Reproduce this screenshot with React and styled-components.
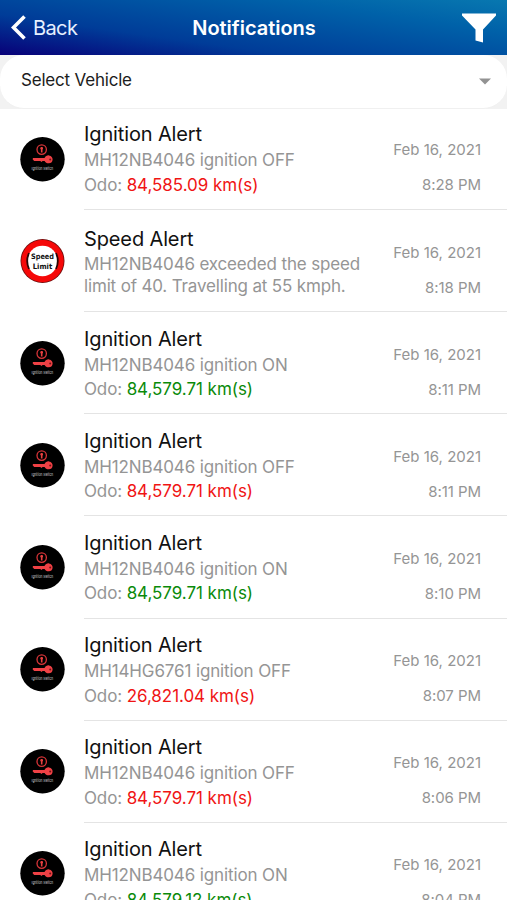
import React from "react";
import styled, { createGlobalStyle } from "styled-components";

const GlobalStyle = createGlobalStyle`
  * {
    box-sizing: border-box;
  }

  body {
    margin: 0;
    background-color: white;
    font-family: Inter, "Liberation Sans", sans-serif;
  }
`;

const Screen = styled.div`
  width: 100%;
  height: 900px;
  overflow: hidden;
  display: flex;
  flex-direction: column;
`;

const Header = styled.header`
  height: 55px;
  flex-shrink: 0;
  display: grid;
  grid-template-columns: 1fr auto 1fr;
  align-items: center;
  padding: 0 11px;
  color: white;
  background: linear-gradient(188deg, #0878b0 0%, #0062a9 25%, #003c98 68%, #080078 100%);
`;

const BackButton = styled.button`
  display: flex;
  align-items: center;
  gap: 7px;
  padding: 0;
  border: none;
  background: none;
  color: #e6f0ff;
  font-family: inherit;
  font-size: 20px;
  letter-spacing: -0.6px;
`;

const Title = styled.h1`
  margin: 0;
  padding-left: 1px;
  font-size: 20px;
  font-weight: 600;
  letter-spacing: -0.03px;
`;

const FilterButton = styled.button`
  justify-self: end;
  display: flex;
  padding: 0;
  border: none;
  background: none;
`;

const SelectBar = styled.div`
  height: 54px;
  flex-shrink: 0;
  background-color: #f2f2f2;
`;

const Select = styled.div`
  height: 100%;
  display: flex;
  align-items: center;
  justify-content: space-between;
  padding: 0 16px 4px 21px;
  border-bottom: 1px solid #f0f0f0;
  border-radius: 24px;
  background-color: white;
  color: #1c1c1c;
  font-size: 17px;
  letter-spacing: -0.2px;
`;

const CaretSlot = styled.span`
  display: flex;
  padding-top: 3px;
`;

const Texts = styled.div`
  padding-top: ${(props) => (props.$tight ? "0" : "2px")};
  color: #959595;
  font-size: 17px;
`;

const When = styled.div`
  display: flex;
  flex-direction: column;
  align-items: flex-end;
  gap: 15px;
  padding-top: 19px;
  color: #959595;
  font-size: 15px;
  line-height: 20px;
`;

const List = styled.ul`
  margin: 0;
  padding: 0;
  list-style: none;
`;

const Row = styled.li`
  height: 102.15px;
  display: flex;
  align-items: center;
  padding-left: 20px;

  &:first-child {
    height: 101px;
  }

  &:first-child ${Texts} {
    padding: 0;
  }

  &:first-child ${When} {
    padding-top: 17px;
  }
`;

const IconSlot = styled.div`
  width: 64px;
  flex-shrink: 0;
  display: flex;
`;

const Content = styled.div`
  flex: 1;
  height: 100%;
  display: flex;
  justify-content: space-between;
  align-items: center;
  padding-right: 26px;
  border-bottom: 1px solid #e4e4e4;
`;

const Name = styled.h2`
  margin: 0;
  color: #111;
  font-size: 20px;
  font-weight: 400;
  line-height: ${(props) => (props.$tight ? "28px" : "27px")};
  letter-spacing: -0.13px;
`;

const Line = styled.p`
  margin: 0;
  line-height: ${(props) => (props.$tight ? "22px" : "24.5px")};
  letter-spacing: ${(props) => (props.$tight ? "-0.16px" : "-0.13px")};
  white-space: nowrap;
`;

const Distance = styled.span`
  color: ${(props) => (props.$on ? "#0a8a0a" : "#f01414")};
  letter-spacing: -0.05px;
`;

const Time = styled.span`
  letter-spacing: -0.05px;
`;

const BackIcon = () => (
  <svg width="15" height="26" viewBox="0 0 15 26">
    <path d="M13.5 1.5 L2.5 12.5 L13.5 23.5" fill="none" stroke="white" strokeWidth="3.6" />
  </svg>
);

const FilterIcon = () => (
  <svg width="34" height="30" viewBox="0 0 34 30">
    <path d="M0 0.5 H34 V2.5 L21 16.5 V29.5 L13.5 27.5 V16.5 L0 2.5 Z" fill="white" />
  </svg>
);

const CaretIcon = () => (
  <svg width="12" height="7" viewBox="0 0 12 7">
    <path d="M0 0.5 H12 L6 6.5 Z" fill="#929292" />
  </svg>
);

const IgnitionIcon = () => (
  <svg width="45" height="45" viewBox="0 0 45 45">
    <circle cx="22.5" cy="22.3" r="22.2" fill="black" />
    <circle cx="21.7" cy="12.6" r="4.7" fill="none" stroke="#d93438" strokeWidth="1.3" />
    <path d="M21.7 9.9 V15.6 M20.3 11.4 H23" stroke="#e8403f" strokeWidth="1.6" />
    <path
      d="M13 21 H24.5 C25.5 19 27.2 18.2 29 18.4 C31.4 18.6 32.8 20.5 32.6 22.7 C32.4 25.1 30.6 26.5 28.5 26.3 C26.8 26.2 25.4 25.3 24.6 23.9 H22.5 L21.5 24.9 L20.3 23.9 H14.2 L12.6 22.3 Z"
      fill="#ef4145"
    />
    <circle cx="30.2" cy="22.4" r="1" fill="#701416" />
    <text
      x="22.3"
      y="33"
      fill="#d0d0d0"
      fontSize="3.8"
      textAnchor="middle"
      textLength="21.5"
      lengthAdjust="spacingAndGlyphs"
    >
      Ignition Switch
    </text>
  </svg>
);

const SpeedIcon = () => (
  <svg width="45" height="45" viewBox="0 0 45 45">
    <circle cx="22.5" cy="22" r="22" fill="#6e0c0c" />
    <circle cx="22.5" cy="22" r="21.2" fill="#f50808" />
    <circle cx="22.5" cy="22" r="15.2" fill="white" />
    <path
      d="M9 14 Q5.4 22 9 30 M36 14 Q39.6 22 36 30"
      fill="none"
      stroke="#2a0505"
      strokeWidth="1.8"
    />
    <g
      fill="#111"
      fontFamily="DejaVu Sans, sans-serif"
      fontSize="7.4"
      fontWeight="700"
      textAnchor="middle"
    >
      <text x="22.5" y="19.6" textLength="23" lengthAdjust="spacingAndGlyphs">
        Speed
      </text>
      <text x="22.5" y="29.8" textLength="19.5" lengthAdjust="spacingAndGlyphs">
        Limit
      </text>
    </g>
  </svg>
);

const notifications = [
  { vehicle: "MH12NB4046", on: false, odo: "84,585.09", time: "8:28 PM" },
  {
    speed: ["MH12NB4046 exceeded the speed", "limit of 40. Travelling at 55 kmph."],
    time: "8:18 PM",
  },
  { vehicle: "MH12NB4046", on: true, odo: "84,579.71", time: "8:11 PM" },
  { vehicle: "MH12NB4046", on: false, odo: "84,579.71", time: "8:11 PM" },
  { vehicle: "MH12NB4046", on: true, odo: "84,579.71", time: "8:10 PM" },
  { vehicle: "MH14HG6761", on: false, odo: "26,821.04", time: "8:07 PM" },
  { vehicle: "MH12NB4046", on: false, odo: "84,579.71", time: "8:06 PM" },
  { vehicle: "MH12NB4046", on: true, odo: "84,579.12", time: "8:04 PM" },
];

const Notification = ({ item }) => (
  <Row>
    <IconSlot>{item.speed ? <SpeedIcon /> : <IgnitionIcon />}</IconSlot>
    <Content>
      {item.speed ? (
        <Texts $tight>
          <Name $tight>Speed Alert</Name>
          {item.speed.map((line) => (
            <Line key={line} $tight>
              {line}
            </Line>
          ))}
        </Texts>
      ) : (
        <Texts>
          <Name>Ignition Alert</Name>
          <Line>
            {item.vehicle} ignition {item.on ? "ON" : "OFF"}
          </Line>
          <Line>
            Odo: <Distance $on={item.on}>{item.odo} km(s)</Distance>
          </Line>
        </Texts>
      )}
      <When>
        <span>Feb 16, 2021</span>
        <Time>{item.time}</Time>
      </When>
    </Content>
  </Row>
);

const App = () => {
  return (
    <Screen>
      <GlobalStyle />
      <Header>
        <BackButton>
          <BackIcon />
          Back
        </BackButton>
        <Title>Notifications</Title>
        <FilterButton>
          <FilterIcon />
        </FilterButton>
      </Header>
      <SelectBar>
        <Select>
          Select Vehicle
          <CaretSlot>
            <CaretIcon />
          </CaretSlot>
        </Select>
      </SelectBar>
      <List>
        {notifications.map((item, index) => (
          <Notification key={index} item={item} />
        ))}
      </List>
    </Screen>
  );
};

export default App;
